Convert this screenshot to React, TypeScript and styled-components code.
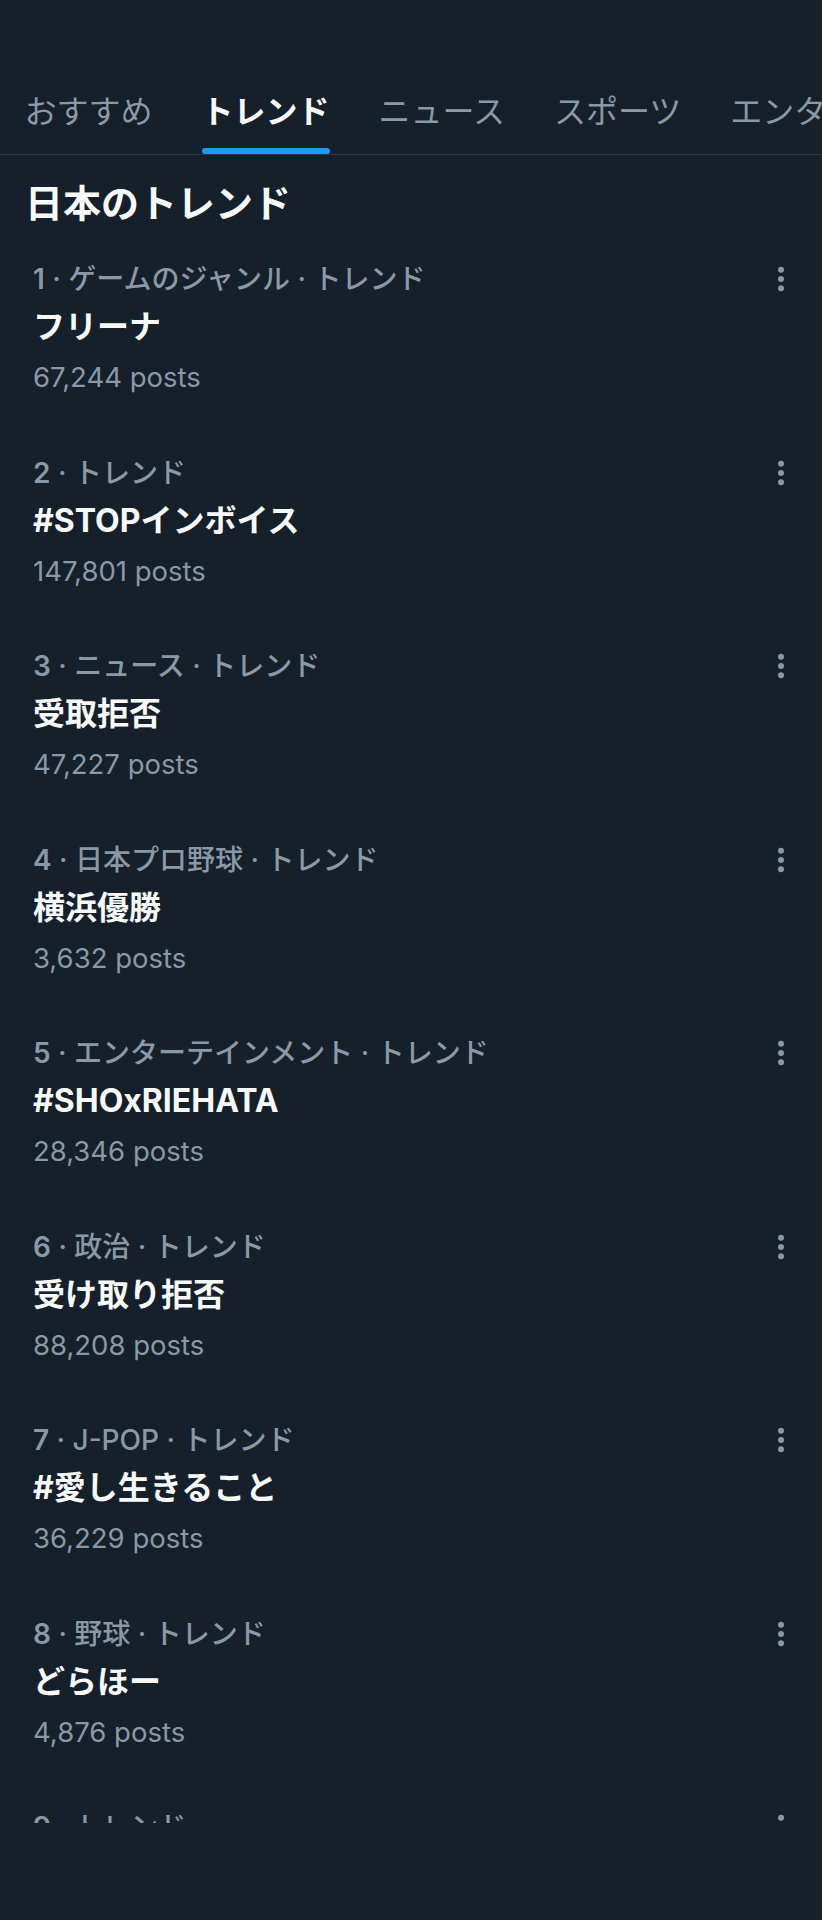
import React from "react";
import styled, { createGlobalStyle } from "styled-components";

interface Trend {
    rank: number;
    category: string;
    title: string;
    posts: string;
}

const tabs = ["おすすめ", "トレンド", "ニュース", "スポーツ", "エンターテイメント"];

const trends: Trend[] = [
    { rank: 1, category: "ゲームのジャンル", title: "フリーナ", posts: "67,244" },
    { rank: 2, category: "", title: "#STOPインボイス", posts: "147,801" },
    { rank: 3, category: "ニュース", title: "受取拒否", posts: "47,227" },
    { rank: 4, category: "日本プロ野球", title: "横浜優勝", posts: "3,632" },
    { rank: 5, category: "エンターテインメント", title: "#SHOxRIEHATA", posts: "28,346" },
    { rank: 6, category: "政治", title: "受け取り拒否", posts: "88,208" },
    { rank: 7, category: "J-POP", title: "#愛し生きること", posts: "36,229" },
    { rank: 8, category: "野球", title: "どらほー", posts: "4,876" },
    { rank: 9, category: "", title: "", posts: "" },
];

const GlobalStyle = createGlobalStyle`
    body {
        margin: 0;
        background: #15202b;
        font-family: "Inter", "Noto Sans CJK JP", sans-serif;
    }
`;

const MoreIcon = () => (
    <svg width="8" height="26" viewBox="0 0 8 26">
        <circle cx="4" cy="3.7" r="3" fill="#8b98a5" />
        <circle cx="4" cy="13" r="3" fill="#8b98a5" />
        <circle cx="4" cy="22.3" r="3" fill="#8b98a5" />
    </svg>
);

const App: React.FC = () => {
    return (
        <Page>
            <GlobalStyle />
            <TabBar>
                {tabs.map((t, i) => (
                    <Tab key={t}>
                        <TabLabel $active={i === 1}>{t}</TabLabel>
                        <Indicator $active={i === 1} />
                    </Tab>
                ))}
            </TabBar>
            <Heading>日本のトレンド</Heading>
            <List>
                {trends.map(({ rank, category, title, posts }) => (
                    <Item key={rank}>
                        <MetaRow>
                            <Category>
                                <Rank>{rank}</Rank> · {category ? `${category} · ` : ""}トレンド
                            </Category>
                            <MoreIcon />
                        </MetaRow>
                        <Title>{title}</Title>
                        <Posts>{posts} posts</Posts>
                    </Item>
                ))}
            </List>
        </Page>
    );
};

const Page = styled.div`
    min-height: 1920px;
    background: #15202b;
    overflow: hidden;
`;

const TabBar = styled.div`
    display: flex;
    padding-top: 89px;
    border-bottom: 1px solid #2c3640;
    white-space: nowrap;
    overflow: hidden;
`;

const Tab = styled.div`
    display: flex;
    flex-direction: column;
    align-items: stretch;
    flex-shrink: 0;
    padding: 0 24.5px;
`;

const TabLabel = styled.span<{ $active: boolean }>`
    font-family: "Noto Sans CJK JP", sans-serif;
    font-size: 32px;
    line-height: 40px;
    font-weight: ${p => (p.$active ? 700 : 400)};
    color: ${p => (p.$active ? "#f7f9f9" : "#8b98a5")};
`;

const Indicator = styled.div<{ $active: boolean }>`
    margin-top: 19px;
    height: 6px;
    border-radius: 3px;
    background: ${p => (p.$active ? "#1d9bf0" : "transparent")};
`;

const Heading = styled.h1`
    margin: 23px 0 0;
    padding-left: 25px;
    font-family: "Noto Sans CJK JP", sans-serif;
    font-size: 38px;
    line-height: 46px;
    font-weight: 700;
    color: #f7f9f9;
`;

// clipped at the bottom like the screenshot
const List = styled.div`
    margin-top: 17px;
    height: 1582px;
    overflow: hidden;
`;

const Item = styled.div`
    height: 193.5px;
    box-sizing: border-box;
    padding: 20px 37px 0 33px;
`;

const MetaRow = styled.div`
    display: flex;
    align-items: center;
    justify-content: space-between;
    height: 36px;
`;

const Category = styled.span`
    font-size: 28px;
    line-height: 36px;
    font-weight: 500;
    color: #8b98a5;
    white-space: nowrap;
`;

const Rank = styled.span`
    font-weight: 600;
`;

const Title = styled.div`
    margin-top: 10px;
    font-size: 32px;
    line-height: 40px;
    font-weight: 700;
    color: #f7f9f9;
    min-height: 40px;
`;

const Posts = styled.div`
    margin-top: 12px;
    font-size: 27.5px;
    line-height: 36px;
    color: #8b98a5;
    min-height: 36px;
`;

export default App;
